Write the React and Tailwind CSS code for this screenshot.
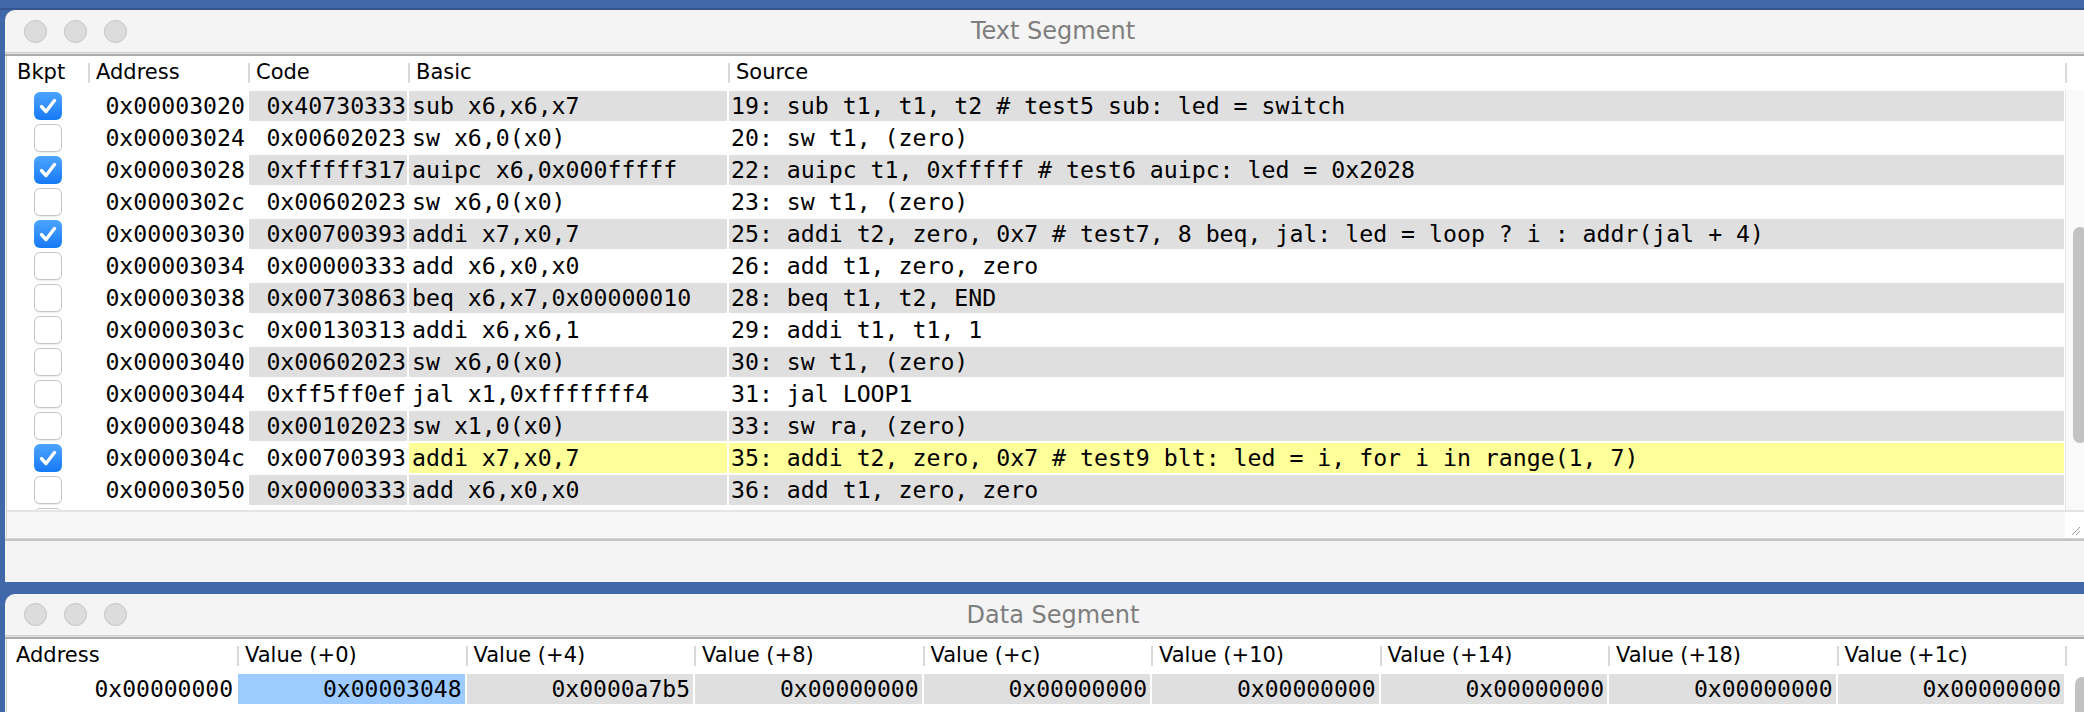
import React from 'react';

const rows = [
    { addr: '0x00003020', code: '0x40730333', basic: 'sub x6,x6,x7', src: '19: sub t1, t1, t2 # test5 sub: led = switch', bp: true },
    { addr: '0x00003024', code: '0x00602023', basic: 'sw x6,0(x0)', src: '20: sw t1, (zero)' },
    { addr: '0x00003028', code: '0xfffff317', basic: 'auipc x6,0x000fffff', src: '22: auipc t1, 0xfffff # test6 auipc: led = 0x2028', bp: true },
    { addr: '0x0000302c', code: '0x00602023', basic: 'sw x6,0(x0)', src: '23: sw t1, (zero)' },
    { addr: '0x00003030', code: '0x00700393', basic: 'addi x7,x0,7', src: '25: addi t2, zero, 0x7 # test7, 8 beq, jal: led = loop ? i : addr(jal + 4)', bp: true },
    { addr: '0x00003034', code: '0x00000333', basic: 'add x6,x0,x0', src: '26: add t1, zero, zero' },
    { addr: '0x00003038', code: '0x00730863', basic: 'beq x6,x7,0x00000010', src: '28: beq t1, t2, END' },
    { addr: '0x0000303c', code: '0x00130313', basic: 'addi x6,x6,1', src: '29: addi t1, t1, 1' },
    { addr: '0x00003040', code: '0x00602023', basic: 'sw x6,0(x0)', src: '30: sw t1, (zero)' },
    { addr: '0x00003044', code: '0xff5ff0ef', basic: 'jal x1,0xfffffff4', src: '31: jal LOOP1' },
    { addr: '0x00003048', code: '0x00102023', basic: 'sw x1,0(x0)', src: '33: sw ra, (zero)' },
    { addr: '0x0000304c', code: '0x00700393', basic: 'addi x7,x0,7', src: '35: addi t2, zero, 0x7 # test9 blt: led = i, for i in range(1, 7)', bp: true, hl: true },
    { addr: '0x00003050', code: '0x00000333', basic: 'add x6,x0,x0', src: '36: add t1, zero, zero' },
    { addr: '', code: '', basic: '', src: '' },
];

const dataCols = ['Value (+0)', 'Value (+4)', 'Value (+8)', 'Value (+c)', 'Value (+10)', 'Value (+14)', 'Value (+18)', 'Value (+1c)'];
const dataVals = ['0x00003048', '0x0000a7b5', '0x00000000', '0x00000000', '0x00000000', '0x00000000', '0x00000000', '0x00000000'];

const mono = { fontFamily: '"DejaVu Sans Mono", monospace' };

function Lights() {
    return (
        <div className="flex gap-[17px] pl-[19px]">
            <div className="w-[23px] h-[23px] rounded-full bg-[#dcdcdc] border border-[#c4c4c4]" />
            <div className="w-[23px] h-[23px] rounded-full bg-[#dcdcdc] border border-[#c4c4c4]" />
            <div className="w-[23px] h-[23px] rounded-full bg-[#dcdcdc] border border-[#c4c4c4]" />
        </div>
    );
}

function TitleBar({ title, h }) {
    return (
        <div className="shrink-0">
            <div className={`grid grid-cols-[1fr_auto_1fr] items-center ${h}`}>
                <Lights />
                <div className="text-[24px] text-[#7e7e7e] leading-none">{title}</div>
                <div />
            </div>
            <div className="h-[1px] bg-[#cecece]" />
            <div className="h-[1px] bg-[#e4e4e4]" />
            <div className="h-[2px] bg-[#ababab]" />
        </div>
    );
}

function Checkbox({ checked }) {
    if (checked) {
        return (
            <div className="w-[28px] h-[28px] rounded-[6px] bg-gradient-to-b from-[#4ca4ff] to-[#1479f5] flex items-center justify-center">
                <svg width="28" height="28" viewBox="0 0 28 28">
                    <path d="M7.5 14.5 L12 19.5 L20.5 8.5" fill="none" stroke="white" strokeWidth="3.4" strokeLinecap="round" strokeLinejoin="round" />
                </svg>
            </div>
        );
    }
    return <div className="w-[28px] h-[28px] rounded-[6px] bg-white border border-[#c6c6c6] shadow-[0_1px_1px_rgba(0,0,0,0.08)]" />;
}

function HeadCell({ w, label, first }) {
    return (
        <div className={`${w} flex items-center h-full`}>
            {!first && <div className="w-[2px] h-[20px] bg-[#dadada]" />}
            <div className={first ? 'pl-[10px]' : 'pl-[6px]'}>{label}</div>
        </div>
    );
}

export default function App() {
    return (
        <div className="w-[2084px] h-[712px] overflow-hidden bg-[#4169a9] text-black" style={{ fontFamily: '"DejaVu Sans", sans-serif' }}>
            <div className="h-[10px] border-b-2 border-[#34568f]" />

            {/* Text Segment window */}
            <div className="ml-[5px] w-[2096px] h-[572px] rounded-t-[10px] bg-[#f4f4f4] flex flex-col">
                <TitleBar title="Text Segment" h="h-[42px]" />
                <div className="shrink-0 ml-[1px] border-l border-[#d2d2d2] flex flex-col">
                    <div className="h-[34px] shrink-0 bg-white flex text-[21px]">
                        <HeadCell w="w-[81px]" label="Bkpt" first />
                        <HeadCell w="w-[160px]" label="Address" />
                        <HeadCell w="w-[160px]" label="Code" />
                        <HeadCell w="w-[320px]" label="Basic" />
                        <HeadCell w="w-[1337px]" label="Source" />
                        <div className="flex-1 flex items-center"><div className="w-[2px] h-[20px] bg-[#dadada]" /></div>
                    </div>
                    <div className="h-[420px] shrink-0 flex bg-white">
                        <div className="w-[2058px] h-full overflow-hidden text-[23.2px]" style={mono}>
                            {rows.map((r, i) => {
                                const shade = i % 2 === 0 ? 'bg-[#dfdfdf]' : 'bg-white';
                                const tail = r.hl ? 'bg-[#ffff99]' : shade;
                                return (
                                    <div key={i} className="flex h-[32px] shrink-0 whitespace-pre">
                                        <div className="w-[81px] flex items-center justify-center"><Checkbox checked={r.bp} /></div>
                                        <div className="w-[160px] flex items-center justify-end pr-[3px]">{r.addr}</div>
                                        <div className="w-[160px] p-[1px]"><div className={`h-full flex items-center justify-end pr-[1px] ${shade}`}>{r.code}</div></div>
                                        <div className="w-[320px] p-[1px]"><div className={`h-full flex items-center pl-[3px] ${tail}`}>{r.basic}</div></div>
                                        <div className="w-[1337px] p-[1px]"><div className={`h-full flex items-center pl-[2px] ${tail}`}>{r.src}</div></div>
                                    </div>
                                );
                            })}
                        </div>
                        <div className="flex-1 bg-[#f9f9f9] border-l border-[#e6e6e6] pl-[7px] pt-[137px]">
                            <div className="w-[14px] h-[216px] rounded-[7px] bg-[#c2c2c2]" />
                        </div>
                    </div>
                    <div className="h-[2px] shrink-0 bg-[#e4e4e4]" />
                    <div className="h-[26px] shrink-0 flex">
                        <div className="w-[2058px] bg-[#f7f7f7]" />
                        <div className="flex-1 bg-white flex items-end pl-[6px] pb-[2px]">
                            <svg width="10" height="10" viewBox="0 0 10 10"><path d="M1 9 L9 1 M5 9 L9 5" stroke="#9a9a9a" strokeWidth="1" /></svg>
                        </div>
                    </div>
                </div>
                <div className="h-[1px] shrink-0 bg-[#d6d6d6]" />
                <div className="h-[2px] shrink-0 bg-[#c4c4c4]" />
                <div className="flex-1" />
            </div>

            <div className="h-[12px]" />

            {/* Data Segment window */}
            <div className="ml-[5px] w-[2096px] h-[118px] rounded-t-[10px] bg-[#f4f4f4] flex flex-col">
                <TitleBar title="Data Segment" h="h-[41px]" />
                <div className="ml-[1px] border-l border-[#d2d2d2] flex-1 min-h-0 overflow-hidden bg-white flex">
                    <div className="w-[2058px]">
                        <div className="h-[34px] flex text-[21px]">
                            <div className="w-[230px] flex items-center pl-[9px]">Address</div>
                            {dataCols.map((c) => (
                                <div key={c} className="w-[228.5px] flex items-center">
                                    <div className="w-[2px] h-[20px] bg-[#dadada]" />
                                    <div className="pl-[6px]">{c}</div>
                                </div>
                            ))}
                        </div>
                        <div className="h-[32px] flex text-[23px]" style={mono}>
                            <div className="w-[230px] flex items-center justify-end pr-[4px]">0x00000000</div>
                            {dataVals.map((v, i) => (
                                <div key={i} className="w-[228.5px] p-[1px]">
                                    <div className={`h-full flex items-center justify-end pr-[3px] ${i === 0 ? 'bg-[#9ecbff]' : 'bg-[#dfdfdf]'}`}>{v}</div>
                                </div>
                            ))}
                        </div>
                    </div>
                    <div className="flex-1 flex flex-col">
                        <div className="h-[34px] shrink-0 flex items-center"><div className="w-[2px] h-[20px] bg-[#dadada]" /></div>
                        <div className="flex-1 pl-[10px] pt-[4px]">
                            <div className="w-[14px] h-[60px] rounded-[7px] bg-[#c2c2c2]" />
                        </div>
                    </div>
                </div>
            </div>
        </div>
    );
}
